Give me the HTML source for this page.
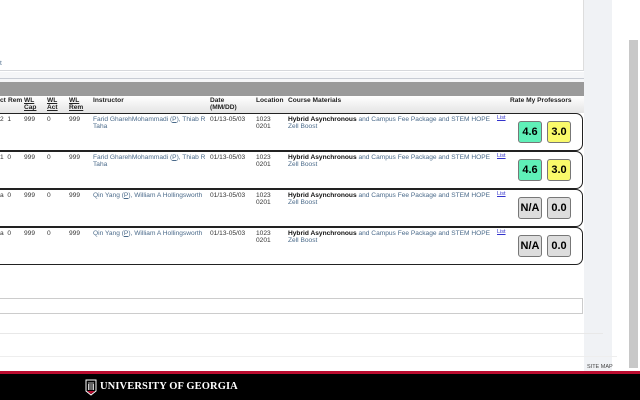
<!DOCTYPE html>
<html><head><style>
*{margin:0;padding:0;box-sizing:border-box}
body{width:640px;height:400px;overflow:hidden;background:#fff;font-family:"Liberation Sans",sans-serif;font-size:6.6px;color:#333;position:relative}
.a{position:absolute}
.b{font-weight:bold;color:#111}
.hd{font-weight:bold;color:#222;font-size:6.6px}
.u{text-decoration:underline}
.row{position:absolute;left:-10px;width:593px;height:38px;border:1px solid #222;border-left:none;border-radius:0 7px 7px 0;background:#fff}
.rt{position:absolute;width:24px;height:22px;border:1px solid #777;border-radius:3px;font:bold 11px "Liberation Sans",sans-serif;color:#000;text-align:center;line-height:20px}
.g{background:#5ff0b8}.y{background:#f9f96a}.n{background:#ddd}
.bl{color:#4a6a8a}
.lk{color:#33c;text-decoration:underline;font-size:5.5px}
</style></head><body>
<div class="a" style="left:584px;top:0;width:28px;height:372px;background:#f0f2f5"></div>
<div class="a" style="left:629px;top:40px;width:9px;height:328px;background:#c8c8c8"></div>
<div class="a" style="left:0;top:0;width:584px;height:71px;background:#fff;border-right:1px solid #ddd;border-bottom:1px solid #d6d8dc"></div>
<div class="a bl" style="left:0;top:60px">t</div>
<div class="a" style="left:0;top:72px;width:584px;height:22px;background:#f5f6f8"></div>
<div class="a" style="left:0;top:78px;width:584px;height:1px;background:#c8ccd4"></div>
<div class="a" style="left:0;top:82px;width:584px;height:14px;background:#9a9a9a"></div>
<div class="a" style="left:0;top:96px;width:584px;height:17px;background:linear-gradient(#fff,#e4e4e4)"></div>
<div class="a hd" style="left:0;top:97px">ct</div>
<div class="a hd" style="left:8px;top:97px">Rem</div>
<div class="a hd u" style="left:24px;top:97px;line-height:7px">WL<br>Cap</div>
<div class="a hd u" style="left:47px;top:97px;line-height:7px">WL<br>Act</div>
<div class="a hd u" style="left:69px;top:97px;line-height:7px">WL<br>Rem</div>
<div class="a hd" style="left:93px;top:97px">Instructor</div>
<div class="a hd" style="left:210px;top:97px;line-height:7px">Date<br>(MM/DD)</div>
<div class="a hd" style="left:256px;top:97px">Location</div>
<div class="a hd" style="left:288px;top:97px">Course Materials</div>
<div class="a hd" style="left:510px;top:97px">Rate My Professors</div>

<div class="row" style="top:113px"></div>
<div class="row" style="top:151px"></div>
<div class="row" style="top:189px"></div>
<div class="row" style="top:227px"></div>

<div class="a" style="left:0;top:116px">2&nbsp;&nbsp;1</div>
<div class="a" style="left:0;top:154px">1&nbsp;&nbsp;0</div>
<div class="a" style="left:0;top:192px">a&nbsp;&nbsp;0</div>
<div class="a" style="left:0;top:230px">a&nbsp;&nbsp;0</div>
<div class="a" style="left:24px;top:116px">999</div><div class="a" style="left:47px;top:116px">0</div><div class="a" style="left:69px;top:116px">999</div>
<div class="a" style="left:24px;top:154px">999</div><div class="a" style="left:47px;top:154px">0</div><div class="a" style="left:69px;top:154px">999</div>
<div class="a" style="left:24px;top:192px">999</div><div class="a" style="left:47px;top:192px">0</div><div class="a" style="left:69px;top:192px">999</div>
<div class="a" style="left:24px;top:230px">999</div><div class="a" style="left:47px;top:230px">0</div><div class="a" style="left:69px;top:230px">999</div>

<div class="a bl" style="left:93px;top:116px;width:116px;line-height:7px">Farid GharehMohammadi (<span class="u">P</span>), Thiab R Taha</div>
<div class="a bl" style="left:93px;top:154px;width:116px;line-height:7px">Farid GharehMohammadi (<span class="u">P</span>), Thiab R Taha</div>
<div class="a bl" style="left:93px;top:192px;width:120px">Qin Yang (<span class="u">P</span>), William A Hollingsworth</div>
<div class="a bl" style="left:93px;top:230px;width:120px">Qin Yang (<span class="u">P</span>), William A Hollingsworth</div>

<div class="a" style="left:210px;top:116px">01/13-05/03</div>
<div class="a" style="left:210px;top:154px">01/13-05/03</div>
<div class="a" style="left:210px;top:192px">01/13-05/03</div>
<div class="a" style="left:210px;top:230px">01/13-05/03</div>
<div class="a" style="left:256px;top:116px;line-height:7px">1023<br>0201</div>
<div class="a" style="left:256px;top:154px;line-height:7px">1023<br>0201</div>
<div class="a" style="left:256px;top:192px;line-height:7px">1023<br>0201</div>
<div class="a" style="left:256px;top:230px;line-height:7px">1023<br>0201</div>

<div class="a bl" style="left:288px;top:116px;line-height:7px"><span class="b">Hybrid Asynchronous</span> and Campus Fee Package and STEM HOPE<br>Zell Boost</div>
<div class="a bl" style="left:288px;top:154px;line-height:7px"><span class="b">Hybrid Asynchronous</span> and Campus Fee Package and STEM HOPE<br>Zell Boost</div>
<div class="a bl" style="left:288px;top:192px;line-height:7px"><span class="b">Hybrid Asynchronous</span> and Campus Fee Package and STEM HOPE<br>Zell Boost</div>
<div class="a bl" style="left:288px;top:230px;line-height:7px"><span class="b">Hybrid Asynchronous</span> and Campus Fee Package and STEM HOPE<br>Zell Boost</div>

<div class="a lk" style="left:497px;top:115px">List</div>
<div class="a lk" style="left:497px;top:153px">List</div>
<div class="a lk" style="left:497px;top:191px">List</div>
<div class="a lk" style="left:497px;top:229px">List</div>

<div class="rt g" style="left:518px;top:121px">4.6</div><div class="rt y" style="left:547px;top:121px">3.0</div>
<div class="rt g" style="left:518px;top:159px">4.6</div><div class="rt y" style="left:547px;top:159px">3.0</div>
<div class="rt n" style="left:518px;top:235px">N/A</div><div class="rt n" style="left:547px;top:235px">0.0</div>
<div class="rt n" style="left:518px;top:197px">N/A</div><div class="rt n" style="left:547px;top:197px">0.0</div>

<div class="a" style="left:-2px;top:298px;width:585px;height:16px;border:1px solid #ccc"></div>
<div class="a" style="left:0;top:333px;width:603px;height:1px;background:#e8e8e8"></div>
<div class="a" style="left:0;top:356px;width:617px;height:1px;background:#eee"></div>
<div class="a" style="left:587px;top:364px;font-size:5.5px;color:#444">SITE MAP</div>
<div class="a" style="left:0;top:371px;width:640px;height:3px;background:#ba0c2f"></div>
<div class="a" style="left:0;top:374px;width:640px;height:26px;background:#000"></div>
<svg class="a" style="left:85px;top:379px" width="12" height="17" viewBox="0 0 12 17"><path d="M1 1h10v11l-5 4-5-4z" fill="none" stroke="#fff" stroke-width="1"/><path d="M3 4h6M3.5 5v6M5 5v6M7 5v6M8.5 5v6" stroke="#fff" stroke-width=".8"/><path d="M2 12h8l-4 3z" fill="#ba0c2f"/></svg>
<div class="a" style="left:100px;top:381px;font:bold 10.5px 'Liberation Serif',serif;color:#fff;letter-spacing:.1px">UNIVERSITY OF GEORGIA</div>
</body></html>
